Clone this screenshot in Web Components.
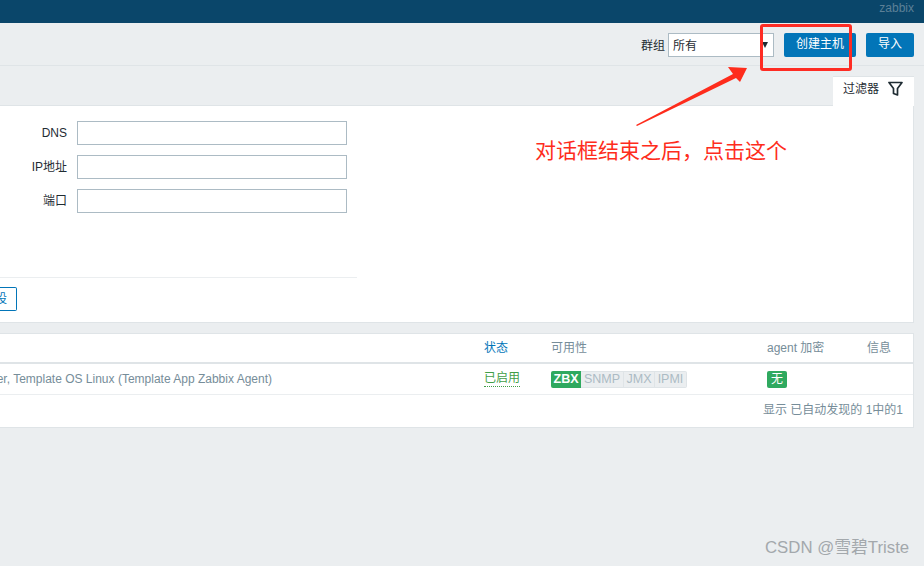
<!DOCTYPE html>
<html lang="zh"><head><meta charset="utf-8"><title>主机</title>
<style>
html,body{margin:0;padding:0;height:100%;overflow:hidden;background:#ebeef0}
body{font:12px/14px Arial,"Liberation Sans","Noto Sans CJK SC",sans-serif;color:#1f2c33;width:924px;height:566px;position:relative}
</style></head><body>
<template id="t-top"><style>
:host{display:flex;justify-content:flex-end;align-items:center;height:23px;background:#0a466a;padding-right:10px;box-sizing:border-box}
span{color:#5c8097;font:12px/14px "Liberation Sans",sans-serif;position:relative;top:-4px}
</style><span><slot></slot></span></template>
<template id="t-head"><style>
:host{display:flex;justify-content:flex-end;align-items:center;height:43px;box-sizing:border-box;border-bottom:1px solid #dfe4e7;padding:2px 10px 0 0;margin-bottom:10px}
label{margin-right:3px;color:#1f2c33;padding-top:2px}
.sel{width:106px;height:24px;box-sizing:border-box;border:1px solid #acbbc4;background:#fff;padding:0 4px;line-height:24px;position:relative;color:#1f2c33}
.sel::after{content:"";position:absolute;right:5px;top:8px;border:3.5px solid transparent;border-top:6px solid #1f2c33;border-bottom:0}
</style><label>群组</label><div class="sel">所有</div><slot></slot></template>
<template id="t-btn"><style>
:host{display:block;height:24px;line-height:23px;padding:0 12px;background:#0275b8;color:#fff;border-radius:2px;margin-left:10px;font-size:12px}
</style><slot></slot></template>
<template id="t-tabs"><style>
:host{display:flex;justify-content:flex-end;padding-right:10px;height:29px}
.tab{width:81px;height:30px;box-sizing:border-box;background:#fff;border-top:1px solid #dfe4e7;display:flex;align-items:center;padding:0 0 6px 10px;gap:9px;position:relative;z-index:1}
svg{display:block;flex:none}
</style><div class="tab"><slot></slot><svg width="15" height="15" viewBox="0 0 15 15"><path d="M1 1.5h13L9.5 7.5v6.5L5.5 12.5V7.5z" fill="#fff" stroke="#1f2c33" stroke-width="1.7" stroke-linejoin="round"/></svg></div></template>
<template id="t-filter"><style>
:host{display:block;width:914px;height:218px;box-sizing:border-box;background:#fff;border-top:1px solid #dfe4e7;border-bottom:1px solid #dfe4e7;border-right:1px solid #dfe4e7;padding-top:15px}
.rows{display:grid;gap:10px;height:156px;align-content:start;grid-template-columns:67px 270px;column-gap:10px}
.div{width:357px;border-top:1px solid #ebeef0;height:9px}
.reset{width:17px;height:24px;box-sizing:border-box;border:1px solid #0275b8;border-left:0;border-radius:0 2px 2px 0;overflow:hidden;color:#0275b8;display:flex;justify-content:flex-end;line-height:22px;padding-right:9px}
.reset span{flex:none}
</style><div class="rows"><slot></slot></div><div class="div"></div><div class="reset"><span>重设</span></div></template>
<template id="t-field"><style>
:host{display:contents}
.l{text-align:right;line-height:24px;color:#1f2c33}
.i{height:24px;box-sizing:border-box;border:1px solid #acbbc4;background:#fff}
</style><div class="l"><slot></slot></div><div class="i"></div></template>
<template id="t-table"><style>
:host{display:block;width:914px;height:95px;box-sizing:border-box;background:#fff;margin-top:10px;border-top:1px solid #dfe4e7;border-bottom:1px solid #dfe4e7;border-right:1px solid #dfe4e7;color:#768d99}
.row{display:grid;grid-template-columns:484px 67px 216px 100px 1fr;align-items:center}
.h{height:28px;border-bottom:2px solid #dfe4e7}
.b{height:30px;border-bottom:1px solid #ebeef0}
.first{display:flex;justify-content:flex-end;width:272px;overflow:hidden;white-space:nowrap}
.first>span{flex:none}
.a{border-bottom:1px solid #d3dce1}
.foot{height:30px;display:flex;justify-content:flex-end;align-items:center;padding:0 10px 0 0}
.st{color:#0275b8}
.on{color:#429e47;border-bottom:1px dotted #429e47;line-height:14px;justify-self:start;padding-bottom:1px}
.badges{display:flex;height:17px;justify-self:start;font:12.5px/15px "Liberation Sans",sans-serif}
.badges span{box-sizing:border-box;background:#ebeef0;color:#acbbc4;border:1px solid #dfe4e7;border-left:0;height:17px;text-align:center}
.badges .z{background:#2fa95f;color:#fff;border:0;font-weight:bold;width:30px;line-height:17px;border-radius:2px 0 0 2px}
.badges .s{width:43px}.badges .j{width:31px}.badges .p{width:32px;border-radius:0 2px 2px 0}
.n{background:#2fa95f;color:#fff;width:20px;height:17px;line-height:17px;text-align:center;border-radius:2px;justify-self:start}
</style>
<div class="row h"><span></span><span class="st">状态</span><span>可用性</span><span>agent 加密</span><span>信息</span></div>
<div class="row b"><div class="first"><span><span class="a">er</span>, <span class="a">Template OS Linux</span> (<span class="a">Template App Zabbix Agent</span>)</span></div><span class="on">已启用</span><div class="badges"><span class="z">ZBX</span><span class="s">SNMP</span><span class="j">JMX</span><span class="p">IPMI</span></div><span class="n">无</span><span></span></div>
<div class="foot"><slot></slot></div></template>
<template id="t-notes"><style>
:host{position:absolute;inset:0;display:block;pointer-events:none}
.box{position:absolute;left:760px;top:24px;width:92px;height:47px;box-sizing:border-box;border:3px solid #fe2c24;border-radius:3px}
.txt{position:absolute;left:535px;top:137px;font:21px/24px "Noto Sans CJK SC",sans-serif;color:#fe2c1c;white-space:nowrap}
.wm{position:absolute;left:765px;top:538px;font:16.8px/20px "Liberation Sans","Noto Sans CJK SC",sans-serif;color:#a3a8ac;white-space:nowrap}
svg{position:absolute;left:0;top:0}
</style><div class="box"></div>
<svg width="924" height="566"><path d="M636 125L733 74L728 67L747 68L740 82L736 78L637 126z" fill="#fe2c1c"/></svg>
<div class="txt"><slot></slot></div><div class="wm">CSDN @雪碧Triste</div></template>

<x-top>zabbix</x-top>
<x-head><x-btn>创建主机</x-btn><x-btn>导入</x-btn></x-head>
<x-tabs>过滤器</x-tabs>
<x-filter><x-field>DNS</x-field><x-field>IP地址</x-field><x-field>端口</x-field></x-filter>
<x-table>显示 已自动发现的 1中的1</x-table>
<x-notes>对话框结束之后，点击这个</x-notes>
<script>
for (const n of ['top','head','btn','tabs','filter','field','table','notes']) {
  customElements.define('x-'+n, class extends HTMLElement {
    constructor(){super();this.attachShadow({mode:'open'}).appendChild(document.getElementById('t-'+n).content.cloneNode(true));}
  });
}
</script>
</body></html>
